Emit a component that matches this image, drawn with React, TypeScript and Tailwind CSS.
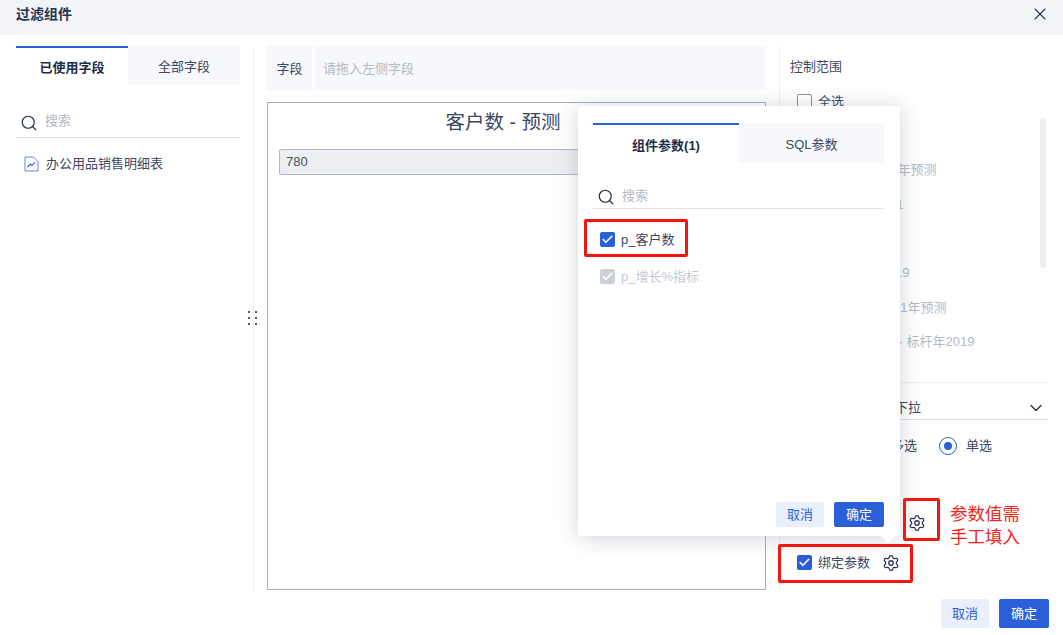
import { Check, ChevronDown, Search, Settings, X } from "lucide-react";

const scope = [
  { label: "全选", pl: "pl-0", box: true },
  { label: "", pl: "pl-0", box: false },
  { label: "客户数 - 2021年预测", pl: "pl-0", box: false },
  { label: "客户数 - 2021", pl: "pl-[6px]", box: false },
  { label: "", pl: "pl-0", box: false },
  { label: "客户数 - 2019", pl: "pl-[12px]", box: false },
  { label: "客户数 - 2021年预测", pl: "pl-[10px]", box: false },
  { label: "增长率 - 标杆年2019", pl: "pl-[38px]", box: false },
];

function Tabs({ first, second, w, pt }: { first: string; second: string; w: string; pt: string }) {
  return (
    <div className="flex h-[39px] text-[13px]">
      <div className={`${w} ${pt} border-t-2 border-[#2b5fd9] flex items-center justify-center font-bold text-[#1f2d4a]`}>{first}</div>
      <div className={`${pt} flex flex-1 items-center justify-center bg-[#f7f8fc] text-[#3c4760]`}>{second}</div>
    </div>
  );
}

function Checkbox({ muted }: { muted?: boolean }) {
  return (
    <span className={`flex h-[15px] w-[15px] shrink-0 items-center justify-center rounded-[2px] ${muted ? "bg-[#ccd0d9]" : "bg-[#2b5fd9]"}`}>
      <Check size={13} strokeWidth={3} color="#fff" />
    </span>
  );
}

function SearchRow({ row, gap }: { row: string; gap: string }) {
  return (
    <div className={`flex items-center ${row} ${gap} border-b border-[#dfe1e9] text-[13px] text-[#b4b9c5]`}>
      <Search size={18} strokeWidth={1.6} color="#25324d" className="mt-[3px]" />
      <span>搜索</span>
    </div>
  );
}

function Btn({ kind, label, h }: { kind: "ghost" | "solid"; label: string; h: string }) {
  return (
    <button className={`${h} rounded-[2px] text-[13px] ${kind === "solid" ? "w-[50px] bg-[#2b5fd9] text-white" : "w-[48px] bg-[#e9effb] text-[#2b5fd9]"}`}>
      {label}
    </button>
  );
}

export default function App() {
  return (
    <div
      className="relative flex h-[635px] w-[1063px] flex-col overflow-hidden bg-white text-[#3c4760]"
      style={{ fontFamily: '"Liberation Sans", "Noto Sans CJK SC", sans-serif' }}
    >
      <header className="flex h-[35px] shrink-0 items-center justify-between bg-[#f3f4f8] pb-[7px] pl-4 pr-[13px]">
        <span className="text-[14px] font-bold text-[#27334f]">过滤组件</span>
        <X size={20} strokeWidth={1.3} color="#27334f" />
      </header>

      <div className="flex h-[555px] shrink-0 pt-[11px] pl-4">
        {/* field list */}
        <div className="w-[224px] shrink-0">
          <Tabs first="已使用字段" second="全部字段" w="w-[112px]" pt="pt-[2px]" />
          <div className="mt-[20px]">
            <SearchRow row="h-[33px] pl-[4px]" gap="gap-[7px]" />
          </div>
          <div className="mt-[16px] flex items-center gap-[7px] pl-[8px] text-[13px] text-[#3c4760]">
            <svg width="15" height="16" viewBox="0 0 15 16" fill="none" stroke="#2b5fd9">
              <path d="M1 1h8.5L14 5.5V15H1z" strokeLinejoin="round" opacity="0.75" />
              <path d="M3.5 11l3-3 1.5 1.5 3-3.5" strokeWidth="1.1" />
            </svg>
            <span>办公用品销售明细表</span>
          </div>
        </div>

        <div className="ml-[13px] w-px shrink-0 bg-[#eceef2]" />

        {/* preview */}
        <div className="ml-[13px] flex w-[499px] shrink-0 flex-col">
          <div className="flex h-[44px] shrink-0 gap-[2px] text-[13px]">
            <div className="flex w-[45px] items-center justify-center bg-[#f7f8fc] pt-[2px] text-[#3c4760]">字段</div>
            <div className="flex flex-1 items-center bg-[#f7f8fc] pl-[9px] pt-[2px] text-[#b4b9c5]">请拖入左侧字段</div>
          </div>
          <div className="mt-[12px] flex-1 border border-[#a2adc0] px-[11px]">
            <div className="pt-[6px] pr-[27px] text-center text-[19.5px] leading-[26px] text-[#3c4760]">客户数 - 预测</div>
            <div className="mt-[14px] flex h-[26px] items-center rounded-[2px] border border-[#aeb8c9] bg-[#eceef2] pl-[6px] text-[13px] text-[#4a5266]">780</div>
          </div>
        </div>

        <div className="ml-[13px] w-px shrink-0 bg-[#eceef2]" />

        {/* control scope */}
        <div className="relative min-w-0 flex-1 pl-[10px] pr-[14px] text-[13px]">
          <div className="pt-[12px] leading-[18px] text-[#3c4760]">控制范围</div>
          <div className="mt-[8.5px] h-[294.5px] overflow-hidden pl-[7px]">
            {scope.map((s, i) => (
              <div key={i} className="flex h-[34.3px] items-center whitespace-nowrap">
                {s.box ? (
                  <>
                    <span className="mr-[6px] h-[15px] w-[15px] rounded-[2px] border border-[#8a93a6]" />
                    <span className="text-[#3c4760]">{s.label}</span>
                  </>
                ) : (
                  <span className={`ml-[21px] ${s.pl} text-[#b4b9c5]`}>{s.label}</span>
                )}
              </div>
            ))}
          </div>
          <div className="mt-[3px] border-t border-[#eceef2]">
            <div className="flex h-[37px] items-center justify-between border-b border-[#dfe1e9] pl-[105px] pr-[3px] pt-[13px] text-[#3c4760]">
              <span>下拉</span>
              <ChevronDown size={20} strokeWidth={1.6} color="#27334f" />
            </div>
          </div>
          <div className="mt-[16px] flex h-[20px] items-center pl-[101px] text-[#3c4760]">
            <span>多选</span>
            <span className="ml-[22px] flex h-[18px] w-[18px] items-center justify-center rounded-full border border-[#2b5fd9]">
              <span className="h-[8px] w-[8px] rounded-full bg-[#2b5fd9]" />
            </span>
            <span className="ml-[9px]">单选</span>
          </div>
          <div className="absolute right-[17px] top-[72px] h-[150px] w-[6px] rounded-full bg-[#eeeff3]" />
          <div className="absolute left-[17px] top-[507px] flex items-center text-[13px] text-[#3c4760]">
            <Checkbox />
            <span className="ml-[6px]">绑定参数</span>
            <Settings size={18} strokeWidth={1.7} color="#27334f" className="ml-[12px]" />
          </div>
        </div>
      </div>

      <footer className="flex flex-1 justify-end gap-[10px] pr-[14px] pt-[9px]">
        <Btn kind="ghost" label="取消" h="h-[29px]" />
        <Btn kind="solid" label="确定" h="h-[29px]" />
      </footer>

      {/* drag handle */}
      <div className="absolute left-[248px] top-[311px] grid grid-cols-2 gap-x-[5px] gap-y-[4px]">
        {[0, 1, 2, 3, 4, 5].map((d) => (
          <span key={d} className="h-[2px] w-[2px] bg-[#4a5874]" />
        ))}
      </div>

      {/* parameter popover */}
      <div className="absolute left-[578px] top-[106px] flex h-[430px] w-[322px] flex-col rounded-[3px] bg-white pl-[15px] pr-[16px] pt-[17px] pb-[9px] shadow-[0_2px_22px_rgba(30,40,70,0.2)]">
        <Tabs first="组件参数(1)" second="SQL参数" w="w-[146px]" pt="pt-[4px]" />
        <div className="mt-[17px]">
          <SearchRow row="h-[30px] pl-[4px] pt-[4px]" gap="gap-[7px]" />
        </div>
        <div className="mt-[21px] flex items-center gap-[6px] pl-[7px] text-[13px] text-[#3c4760]">
          <Checkbox />
          <span>p_客户数</span>
        </div>
        <div className="mt-[17px] flex items-center gap-[6px] pl-[7px] text-[13px] text-[#c4c8d2]">
          <Checkbox muted />
          <span>p_增长%指标</span>
        </div>
        <div className="mt-auto flex justify-end gap-[10px]">
          <Btn kind="ghost" label="取消" h="h-[25px]" />
          <Btn kind="solid" label="确定" h="h-[25px]" />
        </div>
        <span className="absolute left-[305px] top-[425px] h-[10px] w-[10px] rotate-45 bg-white" />
      </div>

      {/* red annotations */}
      <div className="absolute left-[584px] top-[219px] h-[38px] w-[104px] rounded-[2px] border-[3px] border-[#f5170f]" />
      <div className="absolute left-[778px] top-[544px] h-[39px] w-[135px] rounded-[2px] border-[3px] border-[#f5170f]" />
      <div className="absolute left-[903px] top-[498px] flex h-[43px] w-[37px] items-end rounded-[2px] border-[3px] border-[#f5170f] pb-[6px] pl-[2px]">
        <Settings size={18} strokeWidth={1.7} color="#27334f" />
      </div>
      <div className="absolute left-[950px] top-[503px] text-[17.5px] leading-[23px] text-[#f5231a]">
        参数值需
        <br />
        手工填入
      </div>
    </div>
  );
}
